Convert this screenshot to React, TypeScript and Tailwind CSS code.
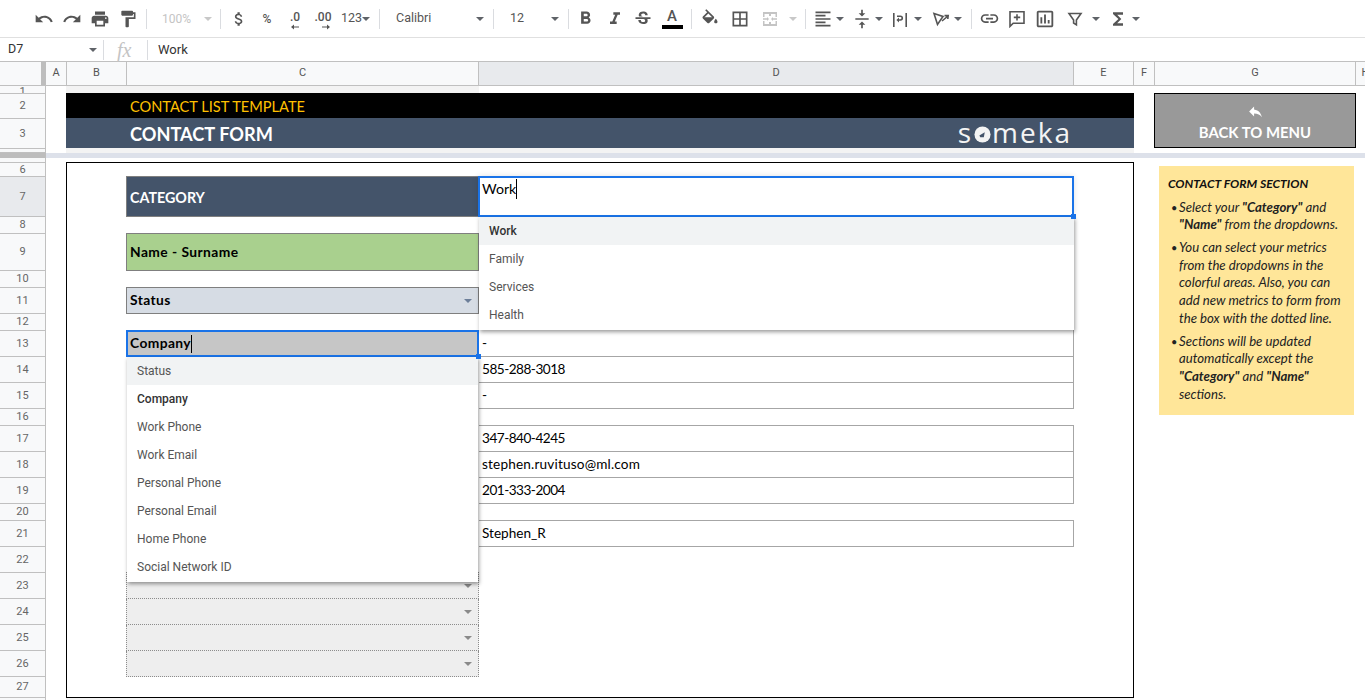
import React from "react";
import {
  MdUndo, MdRedo, MdPrint, MdFormatPaint, MdAttachMoney, MdFormatBold, MdFormatItalic,
  MdStrikethroughS, MdBorderAll, MdFormatAlignLeft, MdVerticalAlignCenter,
  MdLink, MdOutlineInsertChart, MdFunctions, MdReply,
} from "react-icons/md";

const Caret = ({ className = "border-t-[#5f6368]" }: { className?: string }) => (
  <span className={`inline-block w-0 h-0 border-x-[4px] border-t-[4px] border-x-transparent ${className}`} />
);
const Sep = ({ className = "" }: { className?: string }) => (
  <span className={`w-px h-[20px] bg-[#dadce0] shrink-0 ${className}`} />
);
const Btn = ({ children, className = "" }: { children: React.ReactNode; className?: string }) => (
  <span className={`w-[28px] h-[28px] flex items-center justify-center shrink-0 ${className}`}>{children}</span>
);

const ArrowSmall = ({ dir }: { dir: "l" | "r" }) => (
  <svg width="8" height="6" viewBox="0 0 8 6" className="block">
    {dir === "l" ? <path d="M0 3l3-2.6v2h5v1.2H3v2z" fill="#555" /> : <path d="M8 3L5 .4v2H0v1.2h5v2z" fill="#555" />}
  </svg>
);

const rowsTop: [string, string][] = [
  ["1", "h-[8px] items-start"],
  ["2", "h-[25px] items-center"],
  ["3", "h-[30px] items-center"],
  ["", "h-[4px] items-center"],
];
const rowsBody: [string, string][] = [
  ["", "h-[5px] items-center"],
  ["6", "h-[14px] items-center"],
  ["7", "h-[40px] items-center bg-[#e8eaed]"],
  ["8", "h-[17px] items-center"],
  ["9", "h-[37px] items-center"],
  ["10", "h-[17px] items-center"],
  ["11", "h-[26px] items-center"],
  ["12", "h-[17px] items-center"],
  ["13", "h-[26px] items-center"],
  ["14", "h-[26px] items-center"],
  ["15", "h-[26px] items-center"],
  ["16", "h-[17px] items-center"],
  ["17", "h-[26px] items-center"],
  ["18", "h-[26px] items-center"],
  ["19", "h-[26px] items-center"],
  ["20", "h-[17px] items-center"],
  ["21", "h-[26px] items-center"],
  ["22", "h-[26px] items-center"],
  ["23", "h-[26px] items-center"],
  ["24", "h-[26px] items-center"],
  ["25", "h-[26px] items-center"],
  ["26", "h-[26px] items-center"],
  ["27", "h-[21px] items-center"],
];

const RowHead = ({ label, cls }: { label: string; cls: string }) => (
  <div className={`w-full flex justify-center overflow-hidden border-b border-[#c0c0c0] text-[11px] leading-[12px] text-[#666] shrink-0 ${cls}`}>
    {label}
  </div>
);

const ColHead = ({ label, cls }: { label: string; cls: string }) => (
  <div className={`h-full flex items-center justify-center border-r border-[#c0c0c0] text-[11px] text-[#555] shrink-0 ${cls}`}>
    {label}
  </div>
);

const ValueBox = ({ children, cls = "" }: { children?: React.ReactNode; cls?: string }) => (
  <div className={`h-full w-full flex items-center pl-[3px] border-b border-r border-[#a6a6a6] text-[13.6px] text-black ${cls}`}>
    {children}
  </div>
);

const DashedRow = ({ first = false }: { first?: boolean }) => (
  <div className={`h-full w-full flex items-center justify-end pr-[6px] bg-[#eeeeee] border-x border-b border-dotted border-[#8c8c8c] ${first ? "border-t" : ""}`}>
    <Caret className="border-t-[#8a8a8a]" />
  </div>
);

const MenuItem = ({ label, active = false, bold = false }: { label: string; active?: boolean; bold?: boolean }) => (
  <div className={`h-[28px] flex items-center pl-[10px] text-[12px] ${active ? "bg-[#f1f3f4]" : ""} ${bold ? "font-medium text-[#333]" : "text-[#555]"}`}>
    {label}
  </div>
);

const Bullet = ({ children, cls = "mb-[5.5px]" }: { children: React.ReactNode; cls?: string }) => (
  <div className={`flex ${cls}`}>
    <span className="w-[11px] shrink-0 pl-[3px] not-italic text-[11px]">•</span>
    <div className="whitespace-nowrap">{children}</div>
  </div>
);

export default function App() {
  const ic = "#555";
  return (
    <div className="w-[1365px] h-[700px] overflow-hidden bg-white flex flex-col font-['Roboto',sans-serif]">
      {/* toolbar */}
      <div className="h-[38px] shrink-0 border-b border-[#e0e0e0] flex items-center pl-[30px] text-[#555]">
        <Btn><MdUndo size={20} color={ic} /></Btn>
        <Btn><MdRedo size={20} color={ic} /></Btn>
        <Btn><MdPrint size={20} color={ic} /></Btn>
        <Btn><MdFormatPaint size={20} color={ic} /></Btn>
        <Sep className="ml-[4px]" />
        <span className="ml-[15px] w-[29px] text-[12px] text-[#c4c4c4]">100%</span>
        <span className="ml-[13px] flex"><Caret className="border-t-[#c8c8c8]" /></span>
        <Sep className="ml-[8px]" />
        <Btn className="ml-[4px]"><MdAttachMoney size={18} color={ic} /></Btn>
        <Btn className="text-[12px] font-medium">%</Btn>
        <Btn className="flex-col text-[12px] font-medium leading-[12px]">
          <span className="mt-[3px]">.0</span>
          <span className="mt-[1px]"><ArrowSmall dir="l" /></span>
        </Btn>
        <Btn className="flex-col text-[12px] font-medium leading-[12px]">
          <span className="mt-[3px]">.00</span>
          <span className="mt-[1px] pl-[6px]"><ArrowSmall dir="r" /></span>
        </Btn>
        <span className="ml-[4px] text-[12.5px] w-[20px]">123</span>
        <span className="ml-[1px] flex"><Caret /></span>
        <Sep className="ml-[9px]" />
        <span className="ml-[16px] w-[80px] text-[12.5px]">Calibri</span>
        <span className="flex"><Caret /></span>
        <Sep className="ml-[9px]" />
        <span className="ml-[16px] w-[41px] text-[12.5px]">12</span>
        <span className="flex"><Caret /></span>
        <Sep className="ml-[9px]" />
        <Btn className="ml-[2px]"><MdFormatBold size={21} color={ic} /></Btn>
        <Btn className="ml-[2px]"><MdFormatItalic size={20} color={ic} /></Btn>
        <Btn><MdStrikethroughS size={20} color={ic} /></Btn>
        <Btn className="ml-[1px] flex-col relative">
          <span className="text-[15px] font-medium leading-[15px] text-[#555]">A</span>
          <span className="w-[21px] h-[4px] bg-black mt-[1px]" />
        </Btn>
        <Sep className="ml-[5px]" />
        <Btn className="ml-[4px]">
          <svg width="20" height="17" viewBox="0 0 24 20" fill={ic} className="-mt-[3px]">
            <path d="M16.56 8.94L7.62 0 6.21 1.41l2.38 2.38-5.15 5.15c-.59.59-.59 1.54 0 2.12l5.5 5.5c.29.29.68.44 1.06.44s.77-.15 1.06-.44l5.5-5.5c.59-.58.59-1.53 0-2.12zM5.21 10L10 5.21 14.79 10H5.21zM19 11.5s-2 2.17-2 3.5c0 1.1.9 2 2 2s2-.9 2-2c0-1.33-2-3.5-2-3.5z" />
            <path d="M5 10h10l-5 5.5z" />
          </svg>
        </Btn>
        <Btn className="ml-[2px]"><MdBorderAll size={20} color={ic} /></Btn>
        <Btn className="ml-[2px]">
          <svg width="16" height="16" viewBox="0 0 16 16" fill="#c4c4c4">
            <path d="M1 1h14v2H9v2H7V3H1zM1 13h6v-2h2v2h6v2H1zM1 3h1.5v3H1zM13.5 3H15v3h-1.5zM1 10h1.5v3H1zM13.5 10H15v3h-1.5zM1 7.2h4V6l2 2-2 2V8.8H1zM15 7.2h-4V6L9 8l2 2V8.8h4z" />
          </svg>
        </Btn>
        <span className="ml-[5px] flex"><Caret className="border-t-[#c8c8c8]" /></span>
        <Sep className="ml-[8px]" />
        <Btn className="ml-[3px]"><MdFormatAlignLeft size={20} color={ic} /></Btn>
        <span className="flex -ml-[1px]"><Caret /></span>
        <Btn className="ml-[4px]"><MdVerticalAlignCenter size={20} color={ic} /></Btn>
        <span className="flex -ml-[1px]"><Caret /></span>
        <Btn className="ml-[3px]">
          <svg width="18" height="18" viewBox="0 0 18 18" fill={ic}>
            <path d="M2 2h1.6v14H2zM14.4 2H16v14h-1.6zM6 8.2h3.4a1.1 1.1 0 0 0 0-2.2H6V4.4h3.4a2.7 2.7 0 0 1 0 5.4H8v1.6L5.4 9 8 6.6v1.6z" transform="translate(0 1)" />
          </svg>
        </Btn>
        <span className="flex"><Caret /></span>
        <Btn className="ml-[5px]">
          <svg width="20" height="20" viewBox="0 0 20 20" fill="none" stroke={ic} strokeWidth="1.6">
            <path d="M3 4.5l9 3-5.5 8z" />
            <path d="M11 12l6-5M13.5 6.6L17.2 6.5 16.8 10" />
          </svg>
        </Btn>
        <span className="flex -ml-[1px]"><Caret /></span>
        <Sep className="ml-[9px]" />
        <Btn className="ml-[3px]"><MdLink size={21} color={ic} /></Btn>
        <Btn>
          <svg width="18" height="18" viewBox="0 0 18 18" fill="none" stroke={ic} strokeWidth="1.6">
            <path d="M2 1.8h14v11.4H5.2L2 16.4z" />
            <path d="M9 4.2v6.4M5.8 7.4h6.4" />
          </svg>
        </Btn>
        <Btn><MdOutlineInsertChart size={22} color={ic} /></Btn>
        <Btn className="ml-[2px]">
          <svg width="16" height="16" viewBox="0 0 16 16" fill="none" stroke={ic} strokeWidth="1.6">
            <path d="M2 2.5h12L9.4 9v4.8L6.6 12V9z" />
          </svg>
        </Btn>
        <span className="ml-[3px] flex"><Caret /></span>
        <Btn className="ml-[4px]"><MdFunctions size={20} color={ic} /></Btn>
        <span className="flex"><Caret /></span>
      </div>

      {/* formula bar */}
      <div className="h-[24px] shrink-0 border-b border-[#c0c0c0] flex items-center text-[12.5px] text-[#333]">
        <span className="pl-[8px] w-[89px]">D7</span>
        <Caret />
        <Sep className="ml-[6px]" />
        <span className="ml-[13px] w-[30px] font-['Liberation_Serif',serif] italic text-[20px] leading-[20px] text-[#c4c4c4]">fx</span>
        <Sep />
        <span className="ml-[10px] text-[13px]">Work</span>
      </div>

      {/* column header */}
      <div className="h-[24px] shrink-0 flex border-b border-[#c0c0c0] bg-[#f8f9fa]">
        <div className="w-[46px] h-full flex justify-end shrink-0"><span className="w-[5px] h-full bg-[#bdbdbd]" /></div>
        <ColHead label="A" cls="w-[21px]" />
        <ColHead label="B" cls="w-[60px]" />
        <ColHead label="C" cls="w-[352px]" />
        <ColHead label="D" cls="w-[595px] bg-[#e8eaed]" />
        <ColHead label="E" cls="w-[60px]" />
        <ColHead label="F" cls="w-[21px]" />
        <ColHead label="G" cls="w-[201px]" />
        <ColHead label="H" cls="w-[20px]" />
      </div>

      {/* frozen rows */}
      <div className="h-[67px] shrink-0 flex">
        <div className="w-[46px] shrink-0 border-r border-[#c0c0c0] bg-[#f8f9fa] flex flex-col">
          {rowsTop.map(([l, c], i) => <RowHead key={i} label={l} cls={c} />)}
        </div>
        <div className="ml-[20px] flex flex-col w-[1299px]">
          <div className="h-[7px] w-[413px] bg-[#f3f3f3]" />
          <div className="h-[55px] flex">
            <div className="w-[1068px] flex flex-col font-['Lato',sans-serif]">
              <div className="h-[25px] bg-black text-[#ffc000] text-[14.6px] flex items-center pl-[64px] pt-[2px]">CONTACT LIST TEMPLATE</div>
              <div className="h-[30px] bg-[#44546a] text-white flex items-center pl-[64px] pr-[62px] justify-between">
                <span className="text-[18.2px] font-bold pt-[4px]">CONTACT FORM</span>
                <span className="flex items-center text-[28px] leading-none tracking-[2px] text-[#f4f4f4] font-medium font-['Open_Sans',sans-serif] pb-[3px]">
                  <span>s</span>
                  <svg width="17" height="17" viewBox="0 0 19 19" className="mt-[5px] mx-[1px]">
                    <circle cx="9.5" cy="9.5" r="9" fill="#f4f4f4" />
                    <path d="M6 10.5l6-3.5-1 5.5H7z" fill="#44546a" />
                  </svg>
                  <span>meka</span>
                </span>
              </div>
            </div>
            <div className="ml-[20px] w-[202px] h-full bg-[#999999] border border-black flex flex-col items-center text-white font-['Lato',sans-serif]">
              <MdReply size={17} color="#fff" className="mt-[9px]" />
              <span className="text-[14.9px] font-bold leading-[18px] mt-[3px]">BACK TO MENU</span>
            </div>
          </div>
          <div className="h-[5px] w-[1068px] bg-[#f3f3f3]" />
        </div>
      </div>

      {/* freeze divider */}
      <div className="h-[5px] shrink-0 flex">
        <div className="w-[46px] bg-[#bdbdbd]" />
        <div className="flex-1 bg-[#dde1ea]" />
      </div>

      {/* body */}
      <div className="flex-1 min-h-0 flex overflow-hidden">
        <div className="w-[46px] shrink-0 border-r border-[#c0c0c0] bg-[#f8f9fa] flex flex-col">
          {rowsBody.map(([l, c], i) => <RowHead key={i} label={l} cls={c} />)}
        </div>
        <div className="ml-[20px] mt-[4px] w-[1068px] shrink-0 flex flex-col">
          <div className="h-[536px] border border-black flex flex-col pl-[59px] pt-[13px] font-['Lato',sans-serif] shrink-0">
            {/* row 7 */}
            <div className="h-[41px] flex relative shrink-0">
              <div className="w-[353px] h-full bg-[#44546a] border border-[#7f7f7f] flex items-center pl-[3px] text-white font-bold text-[14.3px] pt-[2px]">CATEGORY</div>
              <div className="w-[596px] -ml-px h-full border-2 border-[#1a73e8] bg-white pl-[2px] pt-[1px] text-[14.2px] leading-[20px] text-black flex items-start z-10 shadow-[0_0_6px_rgba(0,0,0,0.12)]">
                <span>Work</span><span className="w-px h-[20px] bg-black" />
              </div>
              <span className="absolute left-[945px] top-[38px] w-[5px] h-[5px] bg-[#1a73e8] z-30" />
              <div className="absolute left-[353px] top-[41px] w-[595px] h-[113px] bg-white z-20 shadow-[1px_2px_4px_rgba(0,0,0,0.4)] font-['Roboto',sans-serif]">
                <MenuItem label="Work" active bold />
                <MenuItem label="Family" />
                <MenuItem label="Services" />
                <MenuItem label="Health" />
              </div>
            </div>
            <div className="h-[16px] shrink-0" />
            {/* row 9 */}
            <div className="h-[38px] shrink-0 w-[353px] bg-[#a9d08e] border border-[#7f7f7f] flex items-center pl-[3px] text-black font-bold text-[13.8px] tracking-[0.45px]">Name - Surname</div>
            <div className="h-[16px] shrink-0" />
            {/* row 11 */}
            <div className="h-[27px] shrink-0 w-[353px] bg-[#d6dce4] border border-[#7f7f7f] flex items-center justify-between pl-[3px] pr-[6px] text-black font-bold text-[13.8px] tracking-[0.4px]">
              <span>Status</span><Caret className="border-t-[#6d7f99]" />
            </div>
            <div className="h-[16px] shrink-0" />
            {/* row 13 */}
            <div className="h-[27px] shrink-0 flex relative">
              <div className="w-[353px] h-full border-2 border-[#1a73e8] bg-[#c6c6c6] flex items-center pl-[2px] text-black font-bold text-[13.8px] tracking-[0.4px] z-10">
                <span>Company</span><span className="w-px h-[18px] bg-black" />
              </div>
              <div className="w-[595px]"><ValueBox>-</ValueBox></div>
              <span className="absolute left-[350px] top-[24px] w-[5px] h-[5px] bg-[#1a73e8] z-30" />
              <div className="absolute left-[1px] top-[27px] w-[351px] h-[225px] bg-white z-20 shadow-[1px_2px_4px_rgba(0,0,0,0.4)] font-['Roboto',sans-serif]">
                <MenuItem label="Status" active />
                <MenuItem label="Company" bold />
                <MenuItem label="Work Phone" />
                <MenuItem label="Work Email" />
                <MenuItem label="Personal Phone" />
                <MenuItem label="Personal Email" />
                <MenuItem label="Home Phone" />
                <MenuItem label="Social Network ID" />
              </div>
            </div>
            <div className="h-[26px] shrink-0 flex"><div className="w-[353px]" /><div className="w-[595px]"><ValueBox cls="tracking-[-0.5px]">585-288-3018</ValueBox></div></div>
            <div className="h-[26px] shrink-0 flex"><div className="w-[353px]" /><div className="w-[595px]"><ValueBox>-</ValueBox></div></div>
            <div className="h-[16px] shrink-0" />
            <div className="h-[27px] shrink-0 flex"><div className="w-[353px]" /><div className="w-[595px]"><ValueBox cls="border-t tracking-[-0.5px]">347-840-4245</ValueBox></div></div>
            <div className="h-[26px] shrink-0 flex"><div className="w-[353px]" /><div className="w-[595px]"><ValueBox cls="tracking-[0.17px]">stephen.ruvituso@ml.com</ValueBox></div></div>
            <div className="h-[26px] shrink-0 flex"><div className="w-[353px]" /><div className="w-[595px]"><ValueBox cls="tracking-[-0.5px]">201-333-2004</ValueBox></div></div>
            <div className="h-[16px] shrink-0" />
            <div className="h-[27px] shrink-0 flex"><div className="w-[353px]" /><div className="w-[595px]"><ValueBox cls="border-t">Stephen_R</ValueBox></div></div>
            <div className="h-[25px] shrink-0" />
            <div className="h-[27px] shrink-0 w-[353px]"><DashedRow first /></div>
            <div className="h-[26px] shrink-0 w-[353px]"><DashedRow /></div>
            <div className="h-[26px] shrink-0 w-[353px]"><DashedRow /></div>
            <div className="h-[26px] shrink-0 w-[353px]"><DashedRow /></div>
          </div>
          <div className="h-[3px] bg-[#f3f3f3]" />
        </div>

        {/* help */}
        <div className="ml-[25px] mt-[8px] w-[195px] h-[249px] shrink-0 bg-[#ffe699] pl-[9px] pt-[9px] font-['Lato',sans-serif] italic text-[13.2px] leading-[17.6px] text-[#222] overflow-hidden">
          <div className="font-bold mb-[6px] text-[12.2px] text-[#111]">CONTACT FORM SECTION</div>
          <Bullet><>Select your <b>"Category"</b> and<br /><b>"Name"</b> from the dropdowns.</></Bullet>
          <Bullet><>You can select your metrics<br />from the dropdowns in the<br />colorful areas. Also, you can<br />add new metrics to form from<br />the box with the dotted line.</></Bullet>
          <Bullet cls=""><>Sections will be updated<br />automatically except the<br /><b>"Category"</b> and <b>"Name"</b><br />sections.</></Bullet>
        </div>
      </div>
    </div>
  );
}
